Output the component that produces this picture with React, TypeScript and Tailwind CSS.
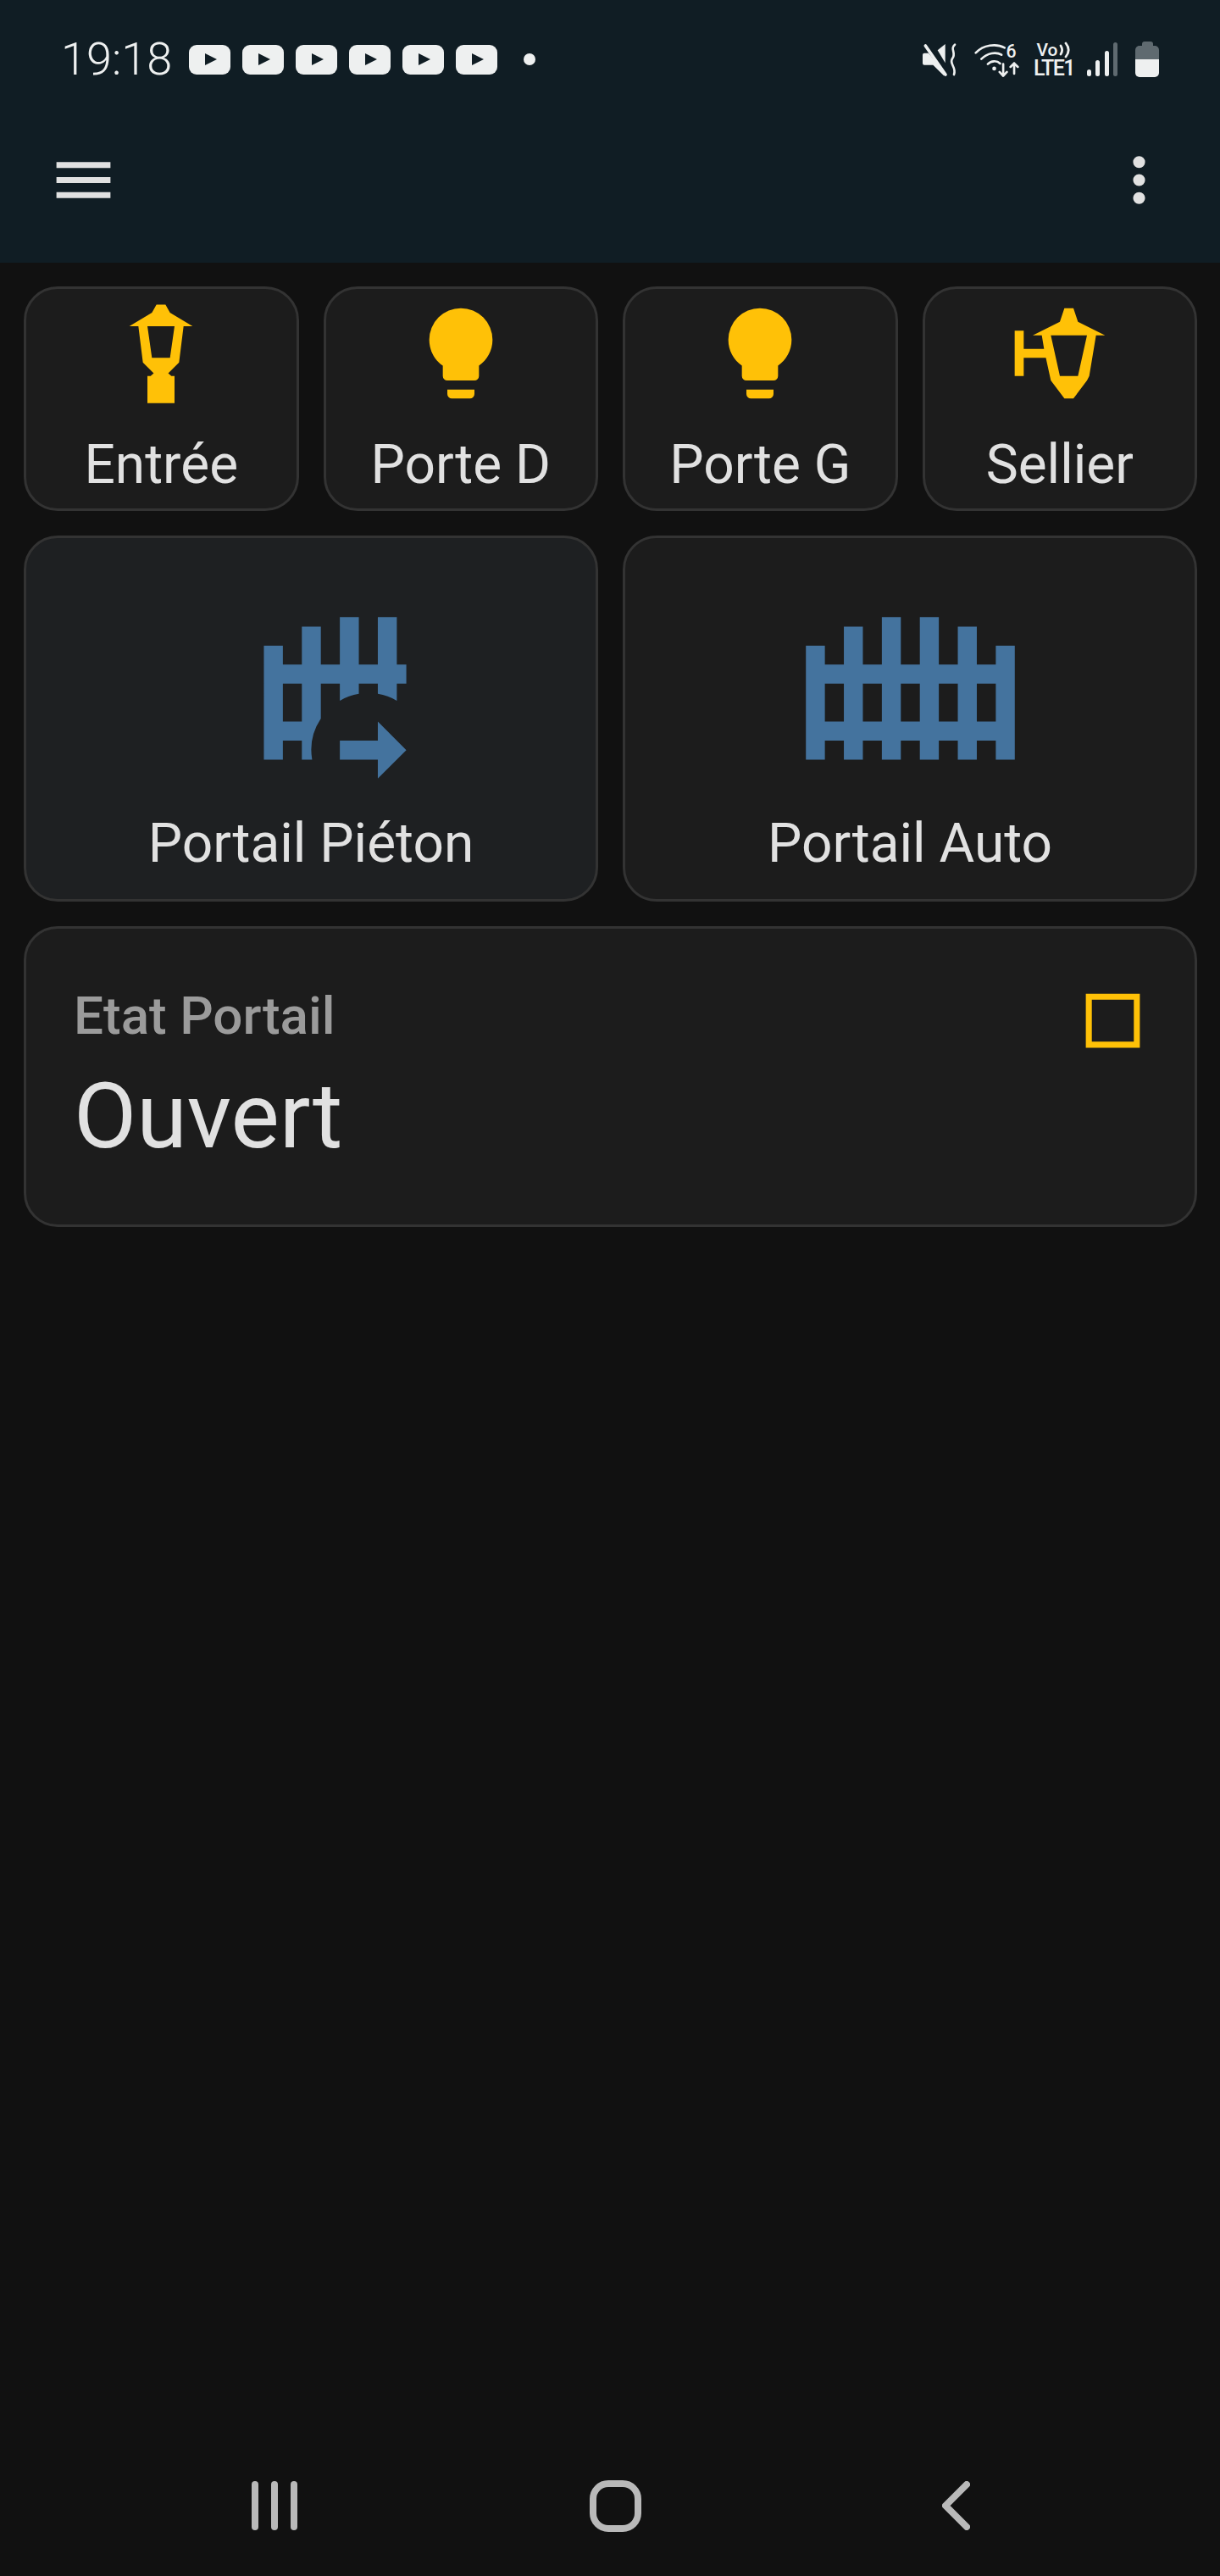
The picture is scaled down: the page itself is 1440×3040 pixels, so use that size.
const YELLOW = "#ffc107";
const BLUE = "#44739e";

function PlayBadge() {
  return (
    <div className="flex h-[35px] w-[49px] items-center justify-center rounded-[9px] bg-[#eef0f0]">
      <svg viewBox="0 0 14 14" className="ml-[3px] h-[14px] w-[14px]">
        <path d="M0 0L14 7L0 14Z" fill="#101d24" />
      </svg>
    </div>
  );
}

function MuteIcon() {
  return (
    <svg viewBox="27 51 123 126" className="h-[42px] w-[41px]" fill="#eef0f0">
      <path d="M27 98Q27 92 33 92H48L110 168L102 172L64 134H33Q27 134 27 128Z" />
      <path d="M37 66L108 168" stroke="#eef0f0" strokeWidth="11" strokeLinecap="round" />
      <path d="M80 82L107 60V127Z" />
      <path d="M141 62C122 78 148 90 132 112C120 130 148 142 138 168" fill="none" stroke="#eef0f0" strokeWidth="8" strokeLinecap="round" />
    </svg>
  );
}

function WifiIcon() {
  return (
    <svg viewBox="205 50 163 126" className="h-[42px] w-[54px]" fill="none" stroke="#eef0f0" strokeWidth="8" strokeLinecap="round" strokeLinejoin="round">
      <path d="M213 90C240 62 285 55 316 72" />
      <path d="M233 112C255 90 285 85 305 97" />
      <path d="M256 130C268 118 288 116 300 128" />
      <circle cx="279" cy="146" r="7" fill="#eef0f0" stroke="none" />
      <path d="M311 130V171M298 158L311 172L324 158" strokeWidth="8" />
      <path d="M350 164V127M337 140L350 127L363 140" strokeWidth="8" />
      <text x="321" y="108" fontFamily="Roboto" fontSize="64" fontWeight="500" fill="#eef0f0" stroke="none">6</text>
    </svg>
  );
}

function LteIcon() {
  return (
    <div className="flex h-[42px] w-[52px] flex-col items-center font-[Roboto] font-medium text-[#eef0f0]">
      <div className="flex h-[20px] items-center">
        <span className="text-[21px] leading-[20px]">Vo</span>
        <svg viewBox="0 0 16 20" className="h-[20px] w-[16px]" fill="none" stroke="#eef0f0" strokeWidth="2.8" strokeLinecap="round">
          <path d="M3 5C5 8 5 12 3 15" />
          <path d="M9 2C13 7 13 13 9 18" />
        </svg>
      </div>
      <span className="text-[25px] leading-[24px] tracking-[-1.5px]">LTE1</span>
    </div>
  );
}

function SignalIcon() {
  return (
    <div className="flex h-[42px] w-[36px] items-end justify-between pb-[1px]">
      <div className="h-[8px] w-[5px] rounded-full bg-[#eef0f0]" />
      <div className="h-[19px] w-[5px] rounded-full bg-[#eef0f0]" />
      <div className="h-[30px] w-[5px] rounded-full bg-[#eef0f0]" />
      <div className="h-[40px] w-[5px] rounded-full bg-[#5f6a70]" />
    </div>
  );
}

function BatteryIcon() {
  return (
    <div className="flex h-[42px] w-[28px] flex-col items-center">
      <div className="h-[5px] w-[13px] rounded-t-[3px] bg-[#5f6a70]" />
      <div className="h-[16px] w-full rounded-t-[5px] bg-[#5f6a70]" />
      <div className="h-[21px] w-full rounded-b-[5px] bg-[#eef0f0]" />
    </div>
  );
}

function StatusBar() {
  return (
    <div className="flex h-[140px] items-center pl-[72px] pr-[72px] font-[Roboto] text-[#eef0f0]">
      <span className="w-[151px] text-[54px] leading-none font-light">19:18</span>
      <div className="flex gap-[14px]">
        <PlayBadge />
        <PlayBadge />
        <PlayBadge />
        <PlayBadge />
        <PlayBadge />
        <PlayBadge />
      </div>
      <div className="ml-[31px] h-[14px] w-[14px] rounded-full bg-[#eef0f0]" />
      <div className="ml-auto flex items-center">
        <MuteIcon />
        <div className="ml-[19px]">
          <WifiIcon />
        </div>
        <div className="ml-[15px]">
          <LteIcon />
        </div>
        <div className="ml-[13px]">
          <SignalIcon />
        </div>
        <div className="ml-[21px]">
          <BatteryIcon />
        </div>
      </div>
    </div>
  );
}

function Toolbar() {
  return (
    <div className="flex h-[144px] items-center justify-between pl-[56px] pr-[53px]">
      <svg viewBox="0 0 24 24" className="h-[85px] w-[85px]" fill="#e1e1e1">
        <path d="M3 6H21V8H3V6M3 11H21V13H3V11M3 16H21V18H3V16Z" />
      </svg>
      <svg viewBox="0 0 24 24" className="h-[85px] w-[85px]" fill="#e1e1e1">
        <path d="M12 16A2 2 0 0 1 14 18A2 2 0 0 1 12 20A2 2 0 0 1 10 18A2 2 0 0 1 12 16M12 10A2 2 0 0 1 14 12A2 2 0 0 1 12 14A2 2 0 0 1 10 12A2 2 0 0 1 12 10M12 4A2 2 0 0 1 14 6A2 2 0 0 1 12 8A2 2 0 0 1 10 6A2 2 0 0 1 12 4Z" />
      </svg>
    </div>
  );
}

const ICONS = {
  post: "M11 1.2H13L14 3L19 6H17L16 14L13.6 16.4L14.3 17H15V23H9V17H9.7L10.4 16.4L8 14L7 6H5L10 3ZM9 6L10 13H14L15 6Z",
  bulb: "M12 2A7 7 0 0 0 5 9C5 11.38 6.19 13.47 8 14.74V17A1 1 0 0 0 9 18H15A1 1 0 0 0 16 17V14.74C17.81 13.47 19 11.38 19 9A7 7 0 0 0 12 2M9 21A1 1 0 0 0 10 22H14A1 1 0 0 0 15 21V20H9V21Z",
  wall: "M13 2H15L16 5L22 8H20L18.5 17L18 18L15 22H13L10 18L8.9 13H4V17H2V7H4V11H8.5L8 8H6L12 5ZM10 8L12 17H16L18 8Z",
  gate: "M9 6V11H7V7H5V11H3V9H1V21H3V19H5V21H7V19H9V21H11V19H13V21H15V19H17V21H19V19H21V21H23V9H21V11H19V7H17V11H15V6H13V11H11V6H9M3 13H5V17H3V13M7 13H9V17H7V13M11 13H13V17H11V13M15 13H17V17H15V13M19 13H21V17H19V13Z",
  gateArrow:
    "M7 9H9V11H11V7H13V11H15V6H17V11H19V6H21V11H22V13H21V14.8A6 6 0 0 0 19 14.08V13H17V14.08A6 6 0 0 0 15 14.8V13H13V16.68A6 6 0 0 0 12.08 21H11V19H9V21H7ZM9 13V17H11V13ZM15 19H19V17L22 20L19 23V21H15Z",
};

function SmallCard({ label, icon }: { label: string; icon: string }) {
  return (
    <div className="flex h-[265px] flex-col items-center rounded-[40px] border-[3px] border-[#333333] bg-[#1c1c1c] pt-[12px]">
      <svg viewBox="0 0 24 24" className="h-[128px] w-[128px]" fill={YELLOW} fillRule="evenodd">
        <path d={icon} />
      </svg>
      <span className="mt-[30px] text-[64px] leading-[75px] text-[#e1e1e1]">{label}</span>
    </div>
  );
}

function GateCard({ label, icon, tint }: { label: string; icon: string; tint: string }) {
  return (
    <div className={`flex h-[432px] flex-col items-center rounded-[40px] border-[3px] border-[#333333] pt-[26px] ${tint}`}>
      <svg viewBox="0 0 24 24" className="h-[269px] w-[269px]" fill={BLUE} fillRule="evenodd">
        <path d={icon} />
      </svg>
      <span className="mt-[28px] text-[64px] leading-[75px] text-[#e1e1e1]">{label}</span>
    </div>
  );
}

function StateCard() {
  return (
    <div className="flex h-[355px] items-start justify-between rounded-[40px] border-[3px] border-[#333333] bg-[#1c1c1c] pl-[56px] pr-[54px] pt-[68px]">
      <div>
        <div className="text-[62px] leading-[70px] font-medium text-[#9b9b9b]">Etat Portail</div>
        <div className="mt-[21px] text-[108px] leading-[124px] text-[#e1e1e1]">Ouvert</div>
      </div>
      <svg viewBox="0 0 24 24" className="mt-[-2px] h-[85px] w-[85px]" fill={YELLOW}>
        <path d="M3 3V21H21V3H3M19 5V19H5V5H19Z" />
      </svg>
    </div>
  );
}

function NavBar() {
  return (
    <div className="mt-auto flex h-[166px] items-center pl-[297px]">
      <div className="flex h-[58px] w-[54px] justify-between">
        <div className="h-full w-[8px] rounded-full bg-[#b9b9b9]" />
        <div className="h-full w-[8px] rounded-full bg-[#b9b9b9]" />
        <div className="h-full w-[8px] rounded-full bg-[#b9b9b9]" />
      </div>
      <div className="ml-[345px] h-[61px] w-[61px] rounded-[22px] border-[8px] border-[#b9b9b9]" />
      <svg viewBox="0 0 33 58" className="ml-[355px] h-[58px] w-[33px]" fill="none" stroke="#b9b9b9" strokeWidth="8" strokeLinecap="round" strokeLinejoin="round">
        <path d="M29 4L4 29L29 54" />
      </svg>
    </div>
  );
}

export default function App() {
  return (
    <div className="flex h-[3040px] w-[1440px] flex-col bg-[#111111] font-[Roboto]">
      <header className="h-[310px] bg-[#101d24]">
        <StatusBar />
        <Toolbar />
      </header>

      <main className="flex flex-col gap-[29px] pl-[28px] pr-[27px] pt-[28px]">
        <div className="grid grid-cols-4 gap-[29px]">
          <SmallCard label="Entrée" icon={ICONS.post} />
          <SmallCard label="Porte D" icon={ICONS.bulb} />
          <SmallCard label="Porte G" icon={ICONS.bulb} />
          <SmallCard label="Sellier" icon={ICONS.wall} />
        </div>
        <div className="grid grid-cols-2 gap-[29px]">
          <GateCard label="Portail Piéton" icon={ICONS.gateArrow} tint="bg-[#1e2022]" />
          <GateCard label="Portail Auto" icon={ICONS.gate} tint="bg-[#1c1c1c]" />
        </div>
        <StateCard />
      </main>

      <NavBar />
    </div>
  );
}
